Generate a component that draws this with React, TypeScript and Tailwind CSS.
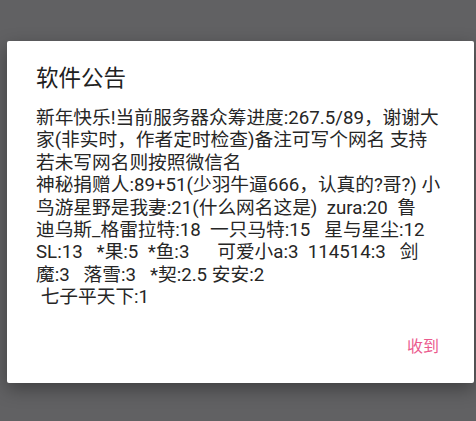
const lines = [
  "新年快乐!当前服务器众筹进度:267.5/89，谢谢大",
  "家(非实时，作者定时检查)备注可写个网名 支持",
  "若未写网名则按照微信名",
  "神秘捐赠人:89+51(少羽牛逼666，认真的?哥?) 小",
  "鸟游星野是我妻:21(什么网名这是)  zura:20  鲁",
  "迪乌斯_格雷拉特:18  一只马特:15   星与星尘:12",
  "SL:13   *果:5  *鱼:3      可爱小a:3  114514:3   剑",
  "魔:3   落雪:3   *契:2.5 安安:2",
  " 七子平天下:1",
]

export default function App() {
  return (
    <div
      className="w-[476px] h-[421px] bg-[#616163] pt-[41px] pl-[7px] overflow-hidden"
      style={{ fontFamily: 'Roboto, "Noto Sans CJK SC", sans-serif' }}
    >
      <div className="w-[467px] h-[342px] bg-white rounded-[2px] shadow-[0_6px_18px_rgba(0,0,0,0.35)] pl-[29px] pr-[20px] pt-[22px] flex flex-col">
        <h2 className="text-[22.5px] leading-[30px] text-[#212121]">软件公告</h2>
        <div className="mt-[14px] text-[18.7px] leading-[22.4px] text-[#262626]">
          {lines.map((line, i) => (
            <div key={i} className="whitespace-pre">
              {line}
            </div>
          ))}
        </div>
        <div className="flex justify-end mt-[28px] pr-[15px]">
          <button className="text-[16px] leading-[20px] text-[#eb5a8e]">收到</button>
        </div>
      </div>
    </div>
  )
}
